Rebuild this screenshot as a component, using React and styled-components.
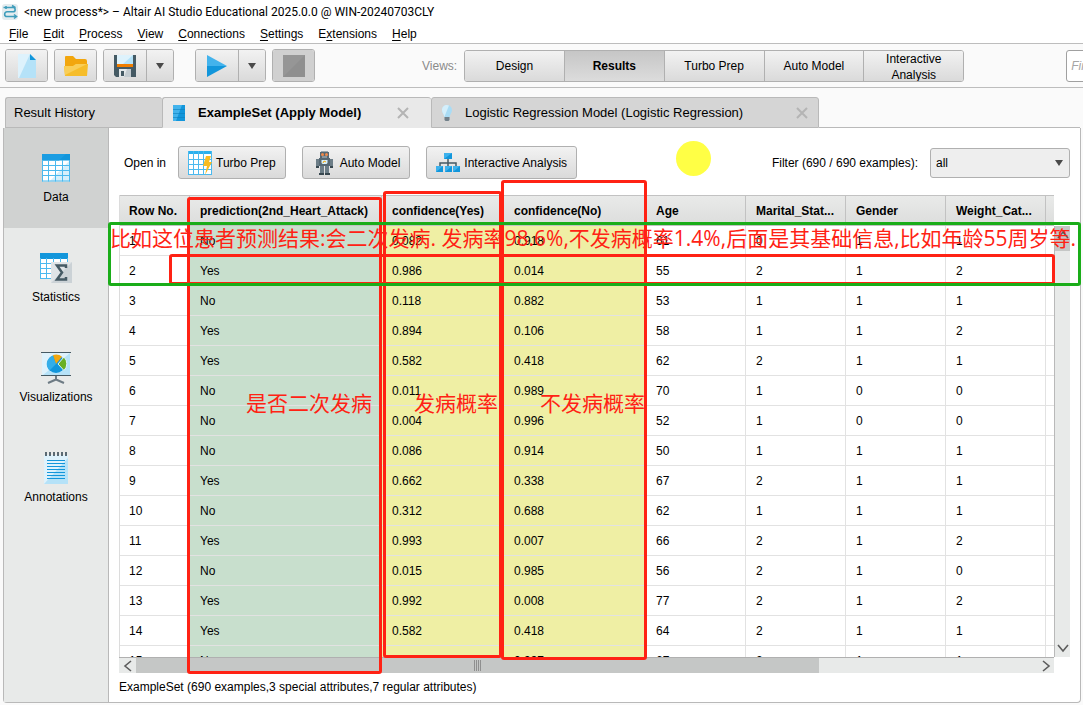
import React from "react";
import styled, { createGlobalStyle, css } from "styled-components";

const GlobalStyle = createGlobalStyle`
  * { box-sizing: border-box; }
  body {
    margin: 0;
    background: #fafafa;
    overflow: hidden;
  }
  body, button, input, select {
    font-family: "Liberation Sans", Arial, sans-serif;
    font-size: 12px;
    color: #000;
  }
`;

const menus = [
  ["", "F", "ile"],
  ["", "E", "dit"],
  ["", "P", "rocess"],
  ["", "V", "iew"],
  ["", "C", "onnections"],
  ["", "S", "ettings"],
  ["E", "x", "tensions"],
  ["", "H", "elp"],
];

const views = ["Design", "Results", "Turbo Prep", "Auto Model", "Interactive Analysis"];

const columns = [
  { name: "Row No.", width: 70 },
  { name: "prediction(2nd_Heart_Attack)", width: 192, tint: "#c8dfcd" },
  { name: "confidence(Yes)", width: 122, tint: "#efefa4" },
  { name: "confidence(No)", width: 142, tint: "#efefa4" },
  { name: "Age", width: 100 },
  { name: "Marital_Stat...", width: 100 },
  { name: "Gender", width: 100 },
  { name: "Weight_Cat...", width: 100 },
  { name: "" },
];

const rows = [
  ["1", "No", "0.082", "0.918", "61", "0", "1", "1"],
  ["2", "Yes", "0.986", "0.014", "55", "2", "1", "2"],
  ["3", "No", "0.118", "0.882", "53", "1", "1", "1"],
  ["4", "Yes", "0.894", "0.106", "58", "1", "1", "2"],
  ["5", "Yes", "0.582", "0.418", "62", "2", "1", "1"],
  ["6", "No", "0.011", "0.989", "70", "1", "0", "0"],
  ["7", "No", "0.004", "0.996", "52", "1", "0", "0"],
  ["8", "No", "0.086", "0.914", "50", "1", "1", "1"],
  ["9", "Yes", "0.662", "0.338", "67", "2", "1", "1"],
  ["10", "No", "0.312", "0.688", "62", "1", "1", "1"],
  ["11", "Yes", "0.993", "0.007", "66", "2", "1", "2"],
  ["12", "No", "0.015", "0.985", "56", "2", "1", "0"],
  ["13", "Yes", "0.992", "0.008", "77", "2", "1", "2"],
  ["14", "Yes", "0.582", "0.418", "64", "2", "1", "1"],
  ["15", "No", "0.063", "0.937", "67", "2", "1", "1"],
];

function AppIcon() {
  return (
    <svg width="16" height="16" viewBox="0 0 16 16">
      <rect width="16" height="16" rx="3" fill="#e4ecef" />
      <g fill="none" stroke="#3f9dbb" strokeWidth="1.6">
        <path d="M1.5 3.5H11a2 2 0 0 1 0 4.3H5a2.2 2.2 0 0 0 0 4.7h9" />
        <path d="M10 1.5l3.5 2.2M4 2v3M12 10.5l2.5 2-2.5 2" />
      </g>
    </svg>
  );
}

function NewIcon() {
  return (
    <svg width="18" height="24" viewBox="0 0 18 24">
      <path d="M0 0h12l6 6v18H0z" fill="#b5e2f8" />
      <path d="M0 0h12L1 24H0z" fill="#def2fc" />
      <path d="M12 0l6 6h-6z" fill="#1296db" />
    </svg>
  );
}

function OpenIcon() {
  return (
    <svg width="24" height="20" viewBox="0 0 24 20">
      <path d="M1 1q0-1 1-1h7l3 3h9q2 0 2 2v14H1z" fill="#f2a60d" />
      <path d="M0 10h9l3-2h12l-1 12H1z" fill="#f6bd2a" />
      <path d="M0 10h9l3-2h11L1 19z" fill="#f9ce57" />
    </svg>
  );
}

function SaveIcon() {
  return (
    <svg width="22" height="22" viewBox="0 0 22 22">
      <path d="M0 0h22v22H2l-2-2z" fill="#455a64" />
      <path d="M3 0h16v9H3z" fill="#def2fc" />
      <path d="M19 0v9H9z" fill="#b5e2f8" />
      <path d="M3 9h16v3H3z" fill="#f07d00" />
      <path d="M5 14h12v8H5z" fill="#e4e8ea" />
      <path d="M7 16h3v5H7z" fill="#455a64" />
      <path d="M13 14h4v8h-7z" fill="#c3cbd0" />
    </svg>
  );
}

function PlayIcon() {
  return (
    <svg width="20" height="22" viewBox="0 0 20 22">
      <path d="M0 0l20 11H0z" fill="#43b3ec" />
      <path d="M0 11h20L0 22z" fill="#1296db" />
    </svg>
  );
}

function StopIcon() {
  return (
    <svg width="22" height="22" viewBox="0 0 22 22">
      <path d="M0 0h22v22H0z" fill="#8f8f8f" />
      <path d="M0 0h22L0 22z" fill="#969696" />
    </svg>
  );
}

function Arrow() {
  return (
    <svg width="8" height="6" viewBox="0 0 8 6">
      <path d="M0 0h8L4 6z" fill="#4a4a4a" />
    </svg>
  );
}

function Chevron({ turn }) {
  return (
    <svg width="12" height="12" viewBox="0 0 12 12">
      <path
        d="M9 1L3 6l6 5"
        transform={`rotate(${turn} 6 6)`}
        fill="none"
        stroke="#5c5c5c"
        strokeWidth="1.6"
      />
    </svg>
  );
}

function CloseIcon() {
  return (
    <svg width="12" height="12" viewBox="0 0 12 12">
      <path d="M1 1l10 10M11 1L1 11" stroke="#b4b4b4" strokeWidth="2" />
    </svg>
  );
}

function SetIcon() {
  return (
    <svg width="12" height="16" viewBox="0 0 12 16">
      <path d="M0 0h12v16H0z" fill="#1296db" />
      <path d="M0 0h9L3 16H0z" fill="#43b3ec" />
      <path d="M0 4.5h12M0 8.5h12M0 12.5h12" stroke="#0d7fbd" strokeOpacity=".6" />
    </svg>
  );
}

function BulbIcon() {
  return (
    <svg width="10" height="16" viewBox="0 0 10 16">
      <path d="M5 0a5 5 0 0 1 5 5c0 3-2 4-2.3 7H2.3C2 9 0 8 0 5a5 5 0 0 1 5-5z" fill="#a9dcf5" />
      <path d="M5 0C2 0 0 2 0 5c0 3 2 4 2.3 7L7 .5z" fill="#d5effb" />
      <path d="M2.5 12h5v3l-1 1h-3l-1-1z" fill="#71808a" />
    </svg>
  );
}

function DataIcon() {
  return (
    <svg width="28" height="28" viewBox="0 0 28 28">
      <path d="M0 6h28v21.5H0z" fill="#fff" />
      <path d="M28 6v21H8z" fill="#d5effb" />
      <path d="M0 0h28v6.5H0z" fill="#1296db" />
      <path d="M0 0h24l-7 6.5H0z" fill="#1b9de2" />
      <path
        d="M.5 6v21.5M6.5 6v21.5M13.5 6v21.5M20.5 6v21.5M27.5 6v21.5M0 11.5h28M0 16.5h28M0 21.5h28M0 27h28"
        stroke="#4bb9ee"
        fill="none"
      />
    </svg>
  );
}

function StatisticsIcon() {
  return (
    <svg width="32" height="30" viewBox="0 0 32 30">
      <path d="M0 5h28v21H0z" fill="#fff" />
      <path d="M0 0h28v6H0z" fill="#1296db" />
      <path
        d="M.5 5v21M6.5 5v21M13.5 5v21M20.5 5v21M27.5 5v21M0 10.5h28M0 15.5h28M0 20.5h28M0 25.5h28"
        stroke="#4bb9ee"
        fill="none"
      />
      <path d="M11 9h21v21H11z" fill="#dfe4e7" />
      <path d="M32 9v21H11z" fill="#cbd2d6" />
      <path d="M26 15v-2.500h-9l5 7-5 7h9V24" fill="none" stroke="#455a64" strokeWidth="2.5" />
    </svg>
  );
}

function ChartIcon() {
  return (
    <svg width="30" height="32" viewBox="0 0 30 32">
      <path d="M1 1h28v22H1z" fill="#def2fc" />
      <path d="M29 1v22H2z" fill="#b5e2f8" />
      <path d="M0 .5h30M0 23.5h30" stroke="#455a64" />
      <circle cx="15" cy="12" r="9" fill="#1296db" />
      <path d="M15 12L8.500 18.500A9 9 0 0 1 12 3.500z" fill="#33aee9" />
      <path d="M15 12L12 3a9 9 0 0 1 9 1.800z" fill="#f2a60d" />
      <path d="M17 12l6-7a9.500 9.500 0 0 1 0 13.500z" fill="#6ab023" stroke="#def2fc" />
      <path d="M15 24v4M15 27.5l-8 3.500M15 27.5l8 3.500" stroke="#6d7b84" strokeWidth="2" fill="none" />
    </svg>
  );
}

function NotesIcon() {
  return (
    <svg width="24" height="32" viewBox="0 0 24 32">
      <path d="M0 3h24v29H0z" fill="#def2fc" />
      <path d="M24 6v26H0z" fill="#b5e2f8" />
      <path d="M2 0v4M6 0v4M10 0v4M14 0v4M18 0v4M22 0v4" stroke="#5b6a73" strokeWidth="2" />
      <path
        d="M3 8.5h18M3 11.5h18M3 14.5h18M3 17.5h18M3 20.5h18M3 23.5h18M3 26.5h18"
        stroke="#1296db"
      />
    </svg>
  );
}

function TurboIcon() {
  return (
    <svg width="24" height="24" viewBox="0 0 24 24">
      <path d="M0 0h24v24H0z" fill="#fff" />
      <path d="M0 0h24v3H0z" fill="#29b0ee" />
      <path
        d="M.5 0v24M5.500 0v24M10.500 0v24M15.500 0v24M0 8.500h24M0 13.500h24M0 18.500h24M0 23.500h24M23.500 0v24"
        stroke="#4bb9ee"
        fill="none"
      />
      <path d="M18 5h5l-2 6h3l-7 13 2-9h-4z" fill="#f9bc20" />
    </svg>
  );
}

function RobotIcon() {
  return (
    <svg width="24" height="24" viewBox="-4 0 24 24">
      <path d="M4 1h9v6H4zM3 7h11v8H3z" fill="#566873" />
      <path d="M0 8h3v9H0zM14 8h3v9h-3zM4 15h4v7H4zM9 15h4v7H9z" fill="#6c7d87" />
      <path d="M0 15h3v2H0zM14 15h3v2h-3zM3 22h5v2H3zM9 22h5v2H9z" fill="#37474f" />
      <path d="M5 0h7v1H5z" fill="#9aa7ae" />
      <circle cx="6.500" cy="3.500" r="1.500" fill="#f08a4b" />
      <circle cx="10.500" cy="3.500" r="1.500" fill="#f08a4b" />
      <path d="M6 6h5" stroke="#b9c3c9" />
      <path d="M5.500 9h6v3l-1 1h-4l-1-1z" fill="#d5effb" />
      <path d="M7 12l1-2 2 1" stroke="#f2a60d" fill="none" />
    </svg>
  );
}

function TreeIcon() {
  return (
    <svg width="24" height="20" viewBox="0 0 24 20">
      <path d="M12 5v9M4 14v-4h16v4" stroke="#455a64" strokeWidth="1.5" fill="none" />
      <path d="M8 0h8v6H8zM0 13h7v6H0zM9 13h7v6H9zM17 13h7v6h-7z" fill="#1296db" />
      <path d="M8 0h8L8 6zM0 13h7l-7 6zM9 13h7l-7 6zM17 13h7l-7 6z" fill="#3db1ec" />
    </svg>
  );
}

const sections = [
  { label: "Data", icon: <DataIcon />, active: true },
  { label: "Statistics", icon: <StatisticsIcon /> },
  { label: "Visualizations", icon: <ChartIcon /> },
  { label: "Annotations", icon: <NotesIcon /> },
];

function App() {
  return (
    <Window>
      <GlobalStyle />
      <TitleBar>
        <AppIcon />
        {"<new process*> – Altair AI Studio Educational 2025.0.0 @ WIN-20240703CLY"}
      </TitleBar>
      <MenuBar>
        {menus.map(([before, key, after]) => (
          <MenuItem key={after}>
            {before}
            <u>{key}</u>
            {after}
          </MenuItem>
        ))}
      </MenuBar>
      <Toolbar>
        <Group>
          <ToolButton aria-label="New"><NewIcon /></ToolButton>
        </Group>
        <Group>
          <ToolButton aria-label="Open"><OpenIcon /></ToolButton>
        </Group>
        <Group>
          <ToolButton aria-label="Save"><SaveIcon /></ToolButton>
          <ToolButton aria-label="Save options"><Arrow /></ToolButton>
        </Group>
        <Group $apart>
          <ToolButton aria-label="Run"><PlayIcon /></ToolButton>
          <ToolButton aria-label="Run options"><Arrow /></ToolButton>
        </Group>
        <Group>
          <ToolButton disabled aria-label="Stop"><StopIcon /></ToolButton>
        </Group>
        <Views>
          <ViewsLabel>Views:</ViewsLabel>
          <ViewSwitch>
            {views.map((view) => (
              <ViewButton key={view} $active={view === "Results"}>{view}</ViewButton>
            ))}
          </ViewSwitch>
        </Views>
        <Search aria-label="Find" placeholder="Find data, operators...etc" />
      </Toolbar>

      <Tabs>
        <Tab $width={157}>Result History</Tab>
        <Tab $width={269} $icon $active>
          <SetIcon />
          <TabName>ExampleSet (Apply Model)</TabName>
          <CloseButton aria-label="Close"><CloseIcon /></CloseButton>
        </Tab>
        <Tab $width={388} $icon>
          <BulbIcon />
          <TabName>Logistic Regression Model (Logistic Regression)</TabName>
          <CloseButton aria-label="Close"><CloseIcon /></CloseButton>
        </Tab>
        <TabFill />
      </Tabs>

      <Panel>
        <Sidebar>
          {sections.map((s) => (
            <SideButton key={s.label} $active={s.active}>
              <SideIcon>{s.icon}</SideIcon>
              {s.label}
            </SideButton>
          ))}
        </Sidebar>
        <Content>
          <Actions>
            <OpenLabel>Open in</OpenLabel>
            <OpenButton><TurboIcon />Turbo Prep</OpenButton>
            <OpenButton><RobotIcon />Auto Model</OpenButton>
            <OpenButton><TreeIcon />Interactive Analysis</OpenButton>
            <FilterLabel htmlFor="filter">Filter (690 / 690 examples):</FilterLabel>
            <SelectBox>
              <Select id="filter" defaultValue="all">
                <option value="all">all</option>
              </Select>
              <SelectArrow><Arrow /></SelectArrow>
            </SelectBox>
          </Actions>
          <Grid>
            <TableView>
              <Table>
                <colgroup>
                  {columns.map((c) => (
                    <col key={c.name} width={c.width} />
                  ))}
                </colgroup>
                <thead>
                  <tr>
                    {columns.map((c) => (
                      <HeadCell key={c.name}>{c.name}</HeadCell>
                    ))}
                  </tr>
                </thead>
                <tbody>
                  {rows.map((row) => (
                    <tr key={row[0]}>
                      {columns.map((c, i) => (
                        <Cell key={c.name} $tint={c.tint}>{row[i]}</Cell>
                      ))}
                    </tr>
                  ))}
                </tbody>
              </Table>
            </TableView>
            <VScroll>
              <VThumb><Chevron turn={90} /></VThumb>
              <Chevron turn={-90} />
            </VScroll>
            <HScroll>
              <ScrollEnd><Chevron turn={0} /></ScrollEnd>
              <HThumb><Grip /></HThumb>
              <ScrollEnd $right><Chevron turn={180} /></ScrollEnd>
            </HScroll>
          </Grid>
          <Status>ExampleSet (690 examples,3 special attributes,7 regular attributes)</Status>
        </Content>
      </Panel>

      <Spot />
      <Mark $x={187} $y={197} $w={195} $h={477} />
      <Mark $x={383} $y={191} $w={119} $h={467} />
      <Mark $x={501} $y={180} $w={146} $h={480} />
      <Mark $x={169} $y={254} $w={886} $h={31} />
      <Mark $x={108} $y={222} $w={973} $h={64} $green />
      <Note $x={110} $y={223}>
        比如这位患者预测结果:会二次发病. 发病率98.6%,不发病概率1.4%,后面是其基础信息,比如年龄55周岁等.
      </Note>
      <Note $x={246} $y={388}>是否二次发病</Note>
      <Note $x={414} $y={388}>发病概率</Note>
      <Note $x={540} $y={388}>不发病概率</Note>
    </Window>
  );
}

const Window = styled.div`
  position: relative;
  display: flex;
  flex-direction: column;
  height: 100vh;
  padding-bottom: 2px;
  overflow: hidden;
`;

const TitleBar = styled.header`
  display: flex;
  align-items: center;
  gap: 6px;
  height: 24px;
  padding: 0 2px;
  background: #fff;
  font-family: Roboto, "Open Sans", sans-serif;
  white-space: nowrap;
`;

const MenuBar = styled.nav`
  display: flex;
  gap: 15px;
  height: 20px;
  padding: 0 9px;
  background: #fff;
  border-bottom: 1px solid #bdbdbd;
`;

const MenuItem = styled.button`
  padding: 0;
  border: 0;
  background: none;

  u {
    text-underline-offset: 2px;
  }
`;

const Toolbar = styled.div`
  display: flex;
  flex: none;
  align-items: center;
  gap: 6px;
  height: 44px;
  padding: 0 5px;
  border-bottom: 1px solid #bdbdbd;
`;

const Group = styled.div`
  display: flex;
  flex: none;
  border: 1px solid #b0b0b0;
  border-radius: 3px;
  overflow: hidden;
  margin-left: ${(p) => (p.$apart ? "15px" : "0")};
`;

const raised = css`
  background: linear-gradient(#f2f2f2, #dadada);
`;

const ToolButton = styled.button`
  display: flex;
  align-items: center;
  justify-content: center;
  width: 42px;
  height: 31px;
  padding: 0;
  border: 0;
  ${raised}

  &:only-child {
    width: 41px;
  }

  & + & {
    width: 27px;
    border-left: 1px solid #b0b0b0;
  }

  &:disabled {
    background: #d0d0d0;
  }
`;

const Views = styled.div`
  display: flex;
  flex: none;
  align-items: center;
  gap: 7px;
  margin: 0 96px 0 101px;
`;

const ViewsLabel = styled.span`
  color: #8a8a8a;
`;

const ViewSwitch = styled(Group)`
  width: 500px;
`;

const ViewButton = styled.button`
  flex: 1 1 0;
  height: 30px;
  padding: 0 16px;
  border: 0;
  line-height: 16px;
  ${raised}

  & + & {
    border-left: 1px solid #b0b0b0;
  }

  ${(p) =>
    p.$active &&
    css`
      background: linear-gradient(#c6c6c6, #dcdcdc);
      font-weight: bold;
    `}
`;

const Search = styled.input`
  flex: none;
  width: 220px;
  height: 32px;
  padding: 0 4px;
  border: 1px solid #a0a0a0;
  border-radius: 3px;
  background: #fff;

  &::placeholder {
    color: #a5a5a5;
    font-style: italic;
  }
`;

const Tabs = styled.div`
  display: flex;
  flex: none;
  height: 31px;
  margin: 9px 3px 0 5px;
`;

const Tab = styled.div`
  display: flex;
  flex: none;
  align-items: center;
  width: ${(p) => p.$width}px;
  padding: 0 10px 0 ${(p) => (p.$icon ? "10px" : "8px")};
  border: 1px solid #b9b9b9;
  border-right-width: 0;
  border-radius: 3px 3px 0 0;
  background: #d5d5d5;
  font-size: 13px;
  white-space: nowrap;

  &:nth-child(3) {
    border-right-width: 1px;
  }

  ${(p) =>
    p.$active &&
    css`
      background: #e9e9e9;
      border-bottom-color: #e9e9e9;
      font-weight: bold;
    `}
`;

const TabName = styled.span`
  flex: 1;
  padding-left: 13px;
`;

const CloseButton = styled.button`
  display: flex;
  margin-right: 12px;
  padding: 0;
  border: 0;
  background: none;

  ${Tab}:nth-child(3) & {
    margin-right: 0;
  }
`;

const TabFill = styled.div`
  flex: 1;
  border-bottom: 1px solid #b9b9b9;
`;

const Panel = styled.main`
  display: flex;
  flex: 1;
  min-height: 0;
  margin: 0 2px 0 3px;
  border: 1px solid #b9b9b9;
  border-top: 0;
  border-radius: 0 0 4px 4px;
  background: #fff;
`;

const Sidebar = styled.nav`
  flex: none;
  width: 105px;
  border-right: 1px solid #b9b9b9;
  background: #e8eae9;
`;

const SideButton = styled.button`
  display: block;
  width: 104px;
  height: 100px;
  padding: 0;
  border: 0;
  background: ${(p) => (p.$active ? "#d0d2d1" : "none")};
  line-height: 16px;
`;

const SideIcon = styled.span`
  display: flex;
  align-items: center;
  justify-content: center;
  height: 32px;
  margin-bottom: 5px;
`;

const Content = styled.section`
  display: flex;
  flex: 1;
  flex-direction: column;
  min-width: 0;
  padding: 18px 10px 7px;
`;

const Actions = styled.div`
  display: flex;
  flex: none;
  align-items: center;
  gap: 16px;
  margin-bottom: 16px;
  padding-left: 5px;
`;

const OpenLabel = styled.span`
  margin-right: -4px;
`;

const OpenButton = styled.button`
  display: flex;
  align-items: center;
  gap: 4px;
  height: 33px;
  padding: 0 9px;
  border: 1px solid #b0b0b0;
  border-radius: 3px;
  white-space: nowrap;
  ${raised}
`;

const FilterLabel = styled.label`
  margin-left: auto;
  margin-right: -4px;
`;

const SelectBox = styled.div`
  position: relative;
`;

const Select = styled.select`
  display: block;
  width: 140px;
  height: 30px;
  padding: 0 5px;
  border: 1px solid #b0b0b0;
  border-radius: 3px;
  background: #eee;
  appearance: none;
`;

const SelectArrow = styled.span`
  position: absolute;
  top: 12px;
  right: 7px;
  display: flex;
  pointer-events: none;
`;

const Grid = styled.div`
  display: grid;
  flex: 1;
  grid-template-columns: minmax(0, 1fr) 16px;
  grid-template-rows: minmax(0, 1fr) 16px;
  min-height: 0;
`;

const TableView = styled.div`
  overflow: hidden;
  border-left: 1px solid #dcdcdc;
`;

const Table = styled.table`
  width: 100%;
  table-layout: fixed;
  border-collapse: separate;
  border-spacing: 0;
`;

const HeadCell = styled.th`
  height: 31px;
  padding: 0 0 0 10px;
  border: 1px solid #c2c2c2;
  border-left: 0;
  background: linear-gradient(#e9eae9, #dcdddc);
  font-size: 12px;
  text-align: left;
  white-space: nowrap;

  &:first-child {
    padding-left: 9px;
  }

  &:last-child {
    border-right: 0;
  }
`;

const Cell = styled.td`
  height: 30px;
  padding: 0 0 0 10px;
  border-right: 1px solid ${(p) => p.$tint || "#e2e2e2"};
  border-bottom: 1px solid #e2e2e2;
  background: ${(p) => p.$tint || "#fff"};

  &:first-child {
    padding-left: 9px;
  }

  &:last-child {
    border-right: 0;
  }
`;

const VScroll = styled.div`
  display: flex;
  flex-direction: column;
  align-items: center;
  justify-content: space-between;
  margin-top: 31px;
  padding-bottom: 3px;
  border-left: 1px solid #b9b9b9;
  background: #e8eae9;
`;

const VThumb = styled.div`
  width: 100%;
  height: 25px;
  padding: 3px 2px;
  background: #c5c7c6;
`;

const HScroll = styled.div`
  display: flex;
  border-top: 1px solid #b0b0b0;
  background: #e8eae9;
`;

const ScrollEnd = styled.div`
  display: flex;
  align-items: center;
  justify-content: center;
  width: 17px;
  margin-left: ${(p) => (p.$right ? "auto" : "0")};
`;

const HThumb = styled.div`
  display: flex;
  align-items: center;
  justify-content: center;
  width: 73%;
  background: #c5c7c6;
`;

const Grip = styled.div`
  width: 7px;
  height: 11px;
  background: repeating-linear-gradient(90deg, #8f8f8f 0 1px, transparent 1px 2px);
`;

const Status = styled.footer`
  flex: none;
  padding-top: 6px;
  line-height: 16px;
`;

const Spot = styled.div`
  position: absolute;
  top: 141px;
  left: 676px;
  width: 35px;
  height: 35px;
  border-radius: 50%;
  background: #ffff45;
`;

const Mark = styled.div`
  position: absolute;
  left: ${(p) => p.$x}px;
  top: ${(p) => p.$y}px;
  width: ${(p) => p.$w}px;
  height: ${(p) => p.$h}px;
  border: 3px solid ${(p) => (p.$green ? "#1aad19" : "#ff2214")};
  border-radius: 3px;
  pointer-events: none;
`;

const Note = styled.div`
  position: absolute;
  left: ${(p) => p.$x}px;
  top: ${(p) => p.$y}px;
  color: #ff2214;
  font-family: "Open Sans", "Noto Sans CJK SC", sans-serif;
  font-size: 21px;
  line-height: 30px;
  white-space: nowrap;
  pointer-events: none;
`;

export default App;
